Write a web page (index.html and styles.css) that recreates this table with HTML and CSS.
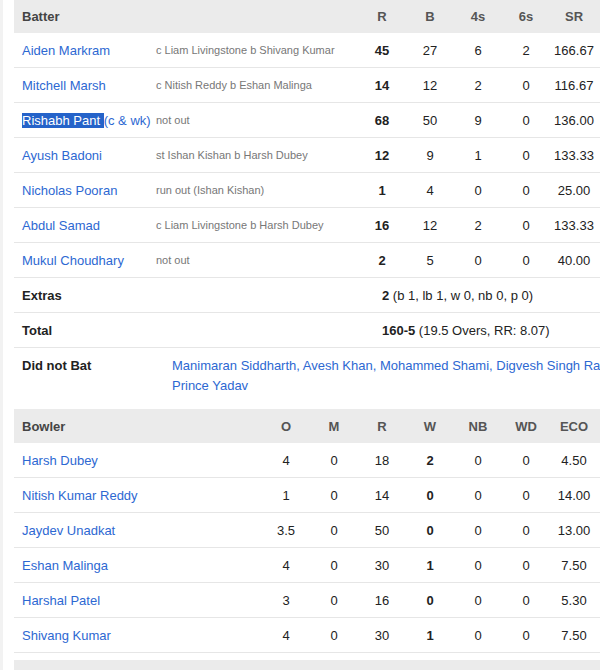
FILE: index.html
```html
<!DOCTYPE html>
<html>
<head>
<meta charset="utf-8">
<link rel="stylesheet" href="styles.css">
</head>
<body>
<div class="page">
  <div class="card">
    <div class="bat-row head">
      <div class="name">Batter</div><div></div>
      <div class="num">R</div><div class="num">B</div><div class="num">4s</div><div class="num">6s</div><div class="num">SR</div><div></div>
    </div>
    <div class="bat-row">
      <div class="name"><a>Aiden Markram</a></div><div class="how">c Liam Livingstone b Shivang Kumar</div>
      <div class="num b">45</div><div class="num">27</div><div class="num">6</div><div class="num">2</div><div class="num">166.67</div><div></div>
    </div>
    <div class="bat-row">
      <div class="name"><a>Mitchell Marsh</a></div><div class="how">c Nitish Reddy b Eshan Malinga</div>
      <div class="num b">14</div><div class="num">12</div><div class="num">2</div><div class="num">0</div><div class="num">116.67</div><div></div>
    </div>
    <div class="bat-row">
      <div class="name"><a><span class="sel">Rishabh Pant </span>(c &amp; wk)</a></div><div class="how">not out</div>
      <div class="num b">68</div><div class="num">50</div><div class="num">9</div><div class="num">0</div><div class="num">136.00</div><div></div>
    </div>
    <div class="bat-row">
      <div class="name"><a>Ayush Badoni</a></div><div class="how">st Ishan Kishan b Harsh Dubey</div>
      <div class="num b">12</div><div class="num">9</div><div class="num">1</div><div class="num">0</div><div class="num">133.33</div><div></div>
    </div>
    <div class="bat-row">
      <div class="name"><a>Nicholas Pooran</a></div><div class="how">run out (Ishan Kishan)</div>
      <div class="num b">1</div><div class="num">4</div><div class="num">0</div><div class="num">0</div><div class="num">25.00</div><div></div>
    </div>
    <div class="bat-row">
      <div class="name"><a>Abdul Samad</a></div><div class="how">c Liam Livingstone b Harsh Dubey</div>
      <div class="num b">16</div><div class="num">12</div><div class="num">2</div><div class="num">0</div><div class="num">133.33</div><div></div>
    </div>
    <div class="bat-row">
      <div class="name"><a>Mukul Choudhary</a></div><div class="how">not out</div>
      <div class="num b">2</div><div class="num">5</div><div class="num">0</div><div class="num">0</div><div class="num">40.00</div><div></div>
    </div>
    <div class="sum-row">
      <div class="label">Extras</div>
      <div class="val"><b>2</b> (b 1, lb 1, w 0, nb 0, p 0)</div>
    </div>
    <div class="sum-row">
      <div class="label">Total</div>
      <div class="val"><b>160-5</b> (19.5 Overs, RR: 8.07)</div>
    </div>
    <div class="dnb-row">
      <div class="label">Did not Bat</div>
      <div class="dnb-list"><a>Manimaran Siddharth</a>, <a>Avesh Khan</a>, <a>Mohammed Shami</a>, <a>Digvesh Singh Rathi</a>, <a>Prince Yadav</a></div>
    </div>

    <div class="bowl-row head">
      <div class="name">Bowler</div>
      <div class="num">O</div><div class="num">M</div><div class="num">R</div><div class="num">W</div><div class="num">NB</div><div class="num">WD</div><div class="num">ECO</div><div></div>
    </div>
    <div class="bowl-row">
      <div class="name"><a>Harsh Dubey</a></div>
      <div class="num">4</div><div class="num">0</div><div class="num">18</div><div class="num b">2</div><div class="num">0</div><div class="num">0</div><div class="num">4.50</div><div></div>
    </div>
    <div class="bowl-row">
      <div class="name"><a>Nitish Kumar Reddy</a></div>
      <div class="num">1</div><div class="num">0</div><div class="num">14</div><div class="num b">0</div><div class="num">0</div><div class="num">0</div><div class="num">14.00</div><div></div>
    </div>
    <div class="bowl-row">
      <div class="name"><a>Jaydev Unadkat</a></div>
      <div class="num">3.5</div><div class="num">0</div><div class="num">50</div><div class="num b">0</div><div class="num">0</div><div class="num">0</div><div class="num">13.00</div><div></div>
    </div>
    <div class="bowl-row">
      <div class="name"><a>Eshan Malinga</a></div>
      <div class="num">4</div><div class="num">0</div><div class="num">30</div><div class="num b">1</div><div class="num">0</div><div class="num">0</div><div class="num">7.50</div><div></div>
    </div>
    <div class="bowl-row">
      <div class="name"><a>Harshal Patel</a></div>
      <div class="num">3</div><div class="num">0</div><div class="num">16</div><div class="num b">0</div><div class="num">0</div><div class="num">0</div><div class="num">5.30</div><div></div>
    </div>
    <div class="bowl-row">
      <div class="name"><a>Shivang Kumar</a></div>
      <div class="num">4</div><div class="num">0</div><div class="num">30</div><div class="num b">1</div><div class="num">0</div><div class="num">0</div><div class="num">7.50</div><div></div>
    </div>
    <div class="next-head"></div>
  </div>
</div>
</body>
</html>
```

FILE: styles.css
```css
html, body {
  margin: 0;
  padding: 0;
  overflow: hidden;
  background: #ffffff;
}

body {
  font-family: "Liberation Sans", Arial, sans-serif;
  font-size: 13px;
  color: #222222;
}

.page {
  border-left: 3px solid #f2f2f2;
  padding-left: 11px;
  min-height: 670px;
}

.card {
  width: 626px;
}

a {
  color: #2d68d2;
  text-decoration: none;
}

.sel {
  background: #2563c9;
  color: #ffffff;
}

.bat-row,
.bowl-row {
  display: grid;
  align-items: center;
  height: 34px;
  border-bottom: 1px solid #e6e6e6;
  white-space: nowrap;
}

.bat-row {
  grid-template-columns: 134px 210px repeat(5, 48px) 1fr;
}

.bowl-row {
  grid-template-columns: 248px repeat(7, 48px) 1fr;
}

.head {
  background: #ebebeb;
  border-bottom: none;
  font-weight: bold;
  color: #444444;
}

.bat-row.head {
  height: 33px;
}

.head .num {
  color: #555555;
}

.name {
  padding-left: 8px;
}

.how {
  padding-left: 8px;
  font-size: 11px;
  color: #777777;
}

.num {
  text-align: center;
}

.b {
  font-weight: bold;
}

.sum-row {
  display: grid;
  grid-template-columns: 368px 1fr;
  align-items: center;
  height: 34px;
  border-bottom: 1px solid #e6e6e6;
}

.label {
  padding-left: 8px;
  font-weight: bold;
  color: #222222;
}

.dnb-row {
  display: grid;
  grid-template-columns: 158px 1fr;
  align-items: start;
  padding: 8px 0 13px;
  line-height: 20px;
}

.dnb-list {
  padding-right: 8px;
  color: #2d68d2;
}

.next-head {
  margin-top: 7px;
  height: 40px;
  background: #ebebeb;
}
```
